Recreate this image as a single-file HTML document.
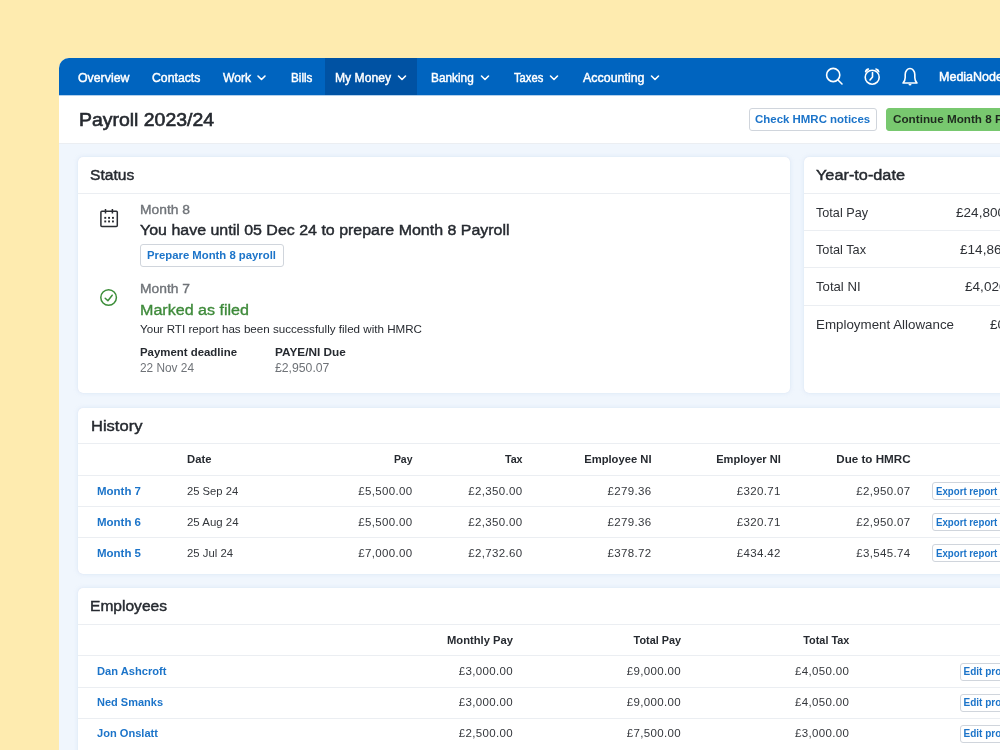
<!DOCTYPE html>
<html><head><meta charset="utf-8"><style>
html,body{margin:0;padding:0;}
body{width:1000px;height:750px;overflow:hidden;position:relative;background:#FEEBAF;font-family:"Liberation Sans",sans-serif;}
.t{position:absolute;line-height:1;white-space:nowrap;transform-origin:0 0;}
.t.r{left:0;text-align:right;transform-origin:100% 0;}
.t.r i{font-style:normal;}
.card{position:absolute;background:#fff;border-radius:5px;box-shadow:0 0 5px rgba(160,185,225,0.22),0 0 1px rgba(160,180,215,0.28);}
.hl{position:absolute;height:1px;}
.btn{position:absolute;border:1px solid #D0D5DC;border-radius:3px;background:#fff;}
</style></head><body>

<div style="position:absolute;left:59px;top:58px;width:1000px;height:800px;border-top-left-radius:10px;overflow:hidden;background:#F0F6FD">
  <div style="position:absolute;left:0;top:0;right:0;height:37px;background:#0064BF"></div>
  <div style="position:absolute;left:266px;top:0;width:92px;height:37px;background:#0052A3"></div>
  <div style="position:absolute;left:0;top:37px;right:0;height:48px;background:#fff;border-bottom:1px solid #EBEEF2"></div>
  <div style="position:absolute;left:0;top:37px;right:0;height:1px;background:rgba(0,100,191,0.3)"></div>
</div>
<div class="card" style="left:78px;top:156.5px;width:711.5px;height:236.5px"></div>
<div class="card" style="left:803.5px;top:156.5px;width:300px;height:236.5px"></div>
<div class="card" style="left:78px;top:407.5px;width:1000px;height:166px"></div>
<div class="card" style="left:78px;top:587.5px;width:1000px;height:300px"></div>

<div class="hl" style="left:78px;top:192.5px;width:711.5px;background:#EBEEF2"></div><div class="hl" style="left:803.5px;top:192.5px;width:196.5px;background:#EBEEF2"></div><div class="hl" style="left:803.5px;top:229.5px;width:196.5px;background:#EBEEF2"></div><div class="hl" style="left:803.5px;top:267px;width:196.5px;background:#EBEEF2"></div><div class="hl" style="left:803.5px;top:304.5px;width:196.5px;background:#EBEEF2"></div><div class="hl" style="left:78px;top:443px;width:922px;background:#EBEEF2"></div><div class="hl" style="left:78px;top:474.5px;width:922px;background:#EBEEF2"></div><div class="hl" style="left:78px;top:505.5px;width:922px;background:#EBEEF2"></div><div class="hl" style="left:78px;top:536.5px;width:922px;background:#EBEEF2"></div><div class="hl" style="left:78px;top:623.5px;width:922px;background:#EBEEF2"></div><div class="hl" style="left:78px;top:655px;width:922px;background:#EBEEF2"></div><div class="hl" style="left:78px;top:686.5px;width:922px;background:#EBEEF2"></div><div class="hl" style="left:78px;top:717.5px;width:922px;background:#EBEEF2"></div>

<div class="btn" style="left:748.5px;top:108px;width:126.5px;height:21px"></div>
<div class="btn" style="left:886px;top:108px;width:200px;height:21px;background:#78C86F;border-color:#78C86F"></div>
<div class="btn" style="left:140px;top:243.5px;width:141.5px;height:21px"></div>
<div class="btn sm" style="left:932.3px;top:482.3px;width:80px;height:15.5px"></div>
<div class="btn sm" style="left:932.3px;top:513.3px;width:80px;height:15.5px"></div>
<div class="btn sm" style="left:932.3px;top:544.3px;width:80px;height:15.5px"></div>
<div class="btn sm" style="left:960.4px;top:663.3px;width:80px;height:15.5px"></div>
<div class="btn sm" style="left:960.4px;top:694.3px;width:80px;height:15.5px"></div>
<div class="btn sm" style="left:960.4px;top:725.3px;width:80px;height:15.5px"></div>


<svg style="position:absolute;left:0;top:0" width="1000" height="750">
  <!-- nav chevrons -->
  <g fill="none" stroke="#fff" stroke-width="1.6" stroke-linecap="round" stroke-linejoin="round">
    <path d="M258 76 l3.5 3.5 l3.5 -3.5"/>
    <path d="M398.5 76 l3.5 3.5 l3.5 -3.5"/>
    <path d="M481.5 76 l3.5 3.5 l3.5 -3.5"/>
    <path d="M550.5 76 l3.5 3.5 l3.5 -3.5"/>
    <path d="M651.5 76 l3.5 3.5 l3.5 -3.5"/>
    <!-- search -->
    <circle cx="833.2" cy="75" r="6.6"/>
    <path d="M838 80 l4 4"/>
    <!-- clock -->
    <circle cx="872.2" cy="77.2" r="7"/>
    <path d="M872.5 72.5 v4.5 l-2.5 3"/>
    <!-- bell -->
    <path d="M903 83 h14 c-1.5 -1.5 -2.2 -3 -2.2 -5.5 v-3 c0 -3.5 -2.3 -6 -4.8 -6 c-2.5 0 -4.8 2.5 -4.8 6 v3 c0 2.5 -0.7 4 -2.2 5.5 z"/>
  </g>
  <path d="M865.5 71.8 c0.3 -1.6 1.6 -2.6 3 -2.8 z M878.9 71.8 c-0.3 -1.6 -1.6 -2.6 -3 -2.8 z" fill="#fff" stroke="#fff" stroke-width="1.4" stroke-linejoin="round"/>
  <path d="M908.5 84 a1.5 1.5 0 0 0 3 0 z" fill="#fff"/>
  <!-- calendar -->
  <g fill="none" stroke="#2A2D33" stroke-width="1.5">
    <rect x="100.9" y="211.2" width="16.4" height="15.2" rx="1"/>
    <path d="M105.5 209 v4.5 M112.4 209 v4.5"/>
  </g>
  <g fill="#2A2D33">
    <rect x="104.3" y="216.9" width="1.9" height="1.9"/><rect x="108.1" y="216.9" width="1.9" height="1.9"/><rect x="112" y="216.9" width="1.9" height="1.9"/>
    <rect x="104.3" y="220.5" width="1.9" height="1.9"/><rect x="108.1" y="220.5" width="1.9" height="1.9"/><rect x="112" y="220.5" width="1.9" height="1.9"/>
  </g>
  <!-- check -->
  <g fill="none" stroke="#3D8E3A" stroke-width="1.5" stroke-linecap="round" stroke-linejoin="round">
    <circle cx="108.6" cy="297.5" r="7.8"/>
    <path d="M105.2 298.3 l2.7 2.5 l4.3 -5.6"/>
  </g>
</svg>

<div style="position:absolute;left:0;top:0;width:1000px;height:750px;will-change:transform">
<span class="t" id="t0" style="left:77.6px;font-size:12.8px;font-weight:400;color:#FFFFFF;top:71.56px;transform:scaleX(0.9636);-webkit-text-stroke:0.45px #FFFFFF;">Overview</span>
<span class="t" id="t1" style="left:151.6px;font-size:12.8px;font-weight:400;color:#FFFFFF;top:71.56px;transform:scaleX(0.9581);-webkit-text-stroke:0.45px #FFFFFF;">Contacts</span>
<span class="t" id="t2" style="left:223.0px;font-size:12.8px;font-weight:400;color:#FFFFFF;top:71.56px;transform:scaleX(0.9451);-webkit-text-stroke:0.45px #FFFFFF;">Work</span>
<span class="t" id="t3" style="left:291.0px;font-size:12.8px;font-weight:400;color:#FFFFFF;top:71.56px;transform:scaleX(0.9119);-webkit-text-stroke:0.45px #FFFFFF;">Bills</span>
<span class="t" id="t4" style="left:335.0px;font-size:12.8px;font-weight:400;color:#FFFFFF;top:71.56px;transform:scaleX(0.9487);-webkit-text-stroke:0.45px #FFFFFF;">My Money</span>
<span class="t" id="t5" style="left:431.0px;font-size:12.8px;font-weight:400;color:#FFFFFF;top:71.56px;transform:scaleX(0.9243);-webkit-text-stroke:0.45px #FFFFFF;">Banking</span>
<span class="t" id="t6" style="left:513.8px;font-size:12.8px;font-weight:400;color:#FFFFFF;top:71.56px;transform:scaleX(0.8748);-webkit-text-stroke:0.45px #FFFFFF;">Taxes</span>
<span class="t" id="t7" style="left:583.0px;font-size:12.8px;font-weight:400;color:#FFFFFF;top:71.56px;transform:scaleX(0.9711);-webkit-text-stroke:0.45px #FFFFFF;">Accounting</span>
<span class="t" id="t8" style="left:938.5px;font-size:12px;font-weight:400;color:#FFFFFF;top:70.84px;transform:scaleX(1.0428);-webkit-text-stroke:0.45px #FFFFFF;">MediaNode</span>
<span class="t" id="t9" style="left:78.8px;font-size:18px;font-weight:400;color:#262A30;top:110.76px;transform:scaleX(1.0792);-webkit-text-stroke:0.6px #262A30;">Payroll 2023/24</span>
<span class="t" id="t10" style="left:755.2px;font-size:11.5px;font-weight:700;color:#1C74C9;top:114.27px;transform:scaleX(0.9959);">Check HMRC notices</span>
<span class="t" id="t11" style="left:893.0px;font-size:11.5px;font-weight:700;color:#1E2A1E;top:114.27px;transform:scaleX(1.0170);">Continue Month 8 Payroll</span>
<span class="t" id="t12" style="left:90.3px;font-size:15.5px;font-weight:400;color:#262A30;top:166.58px;transform:scaleX(1.0056);-webkit-text-stroke:0.45px #262A30;">Status</span>
<span class="t" id="t13" style="left:140.4px;font-size:13px;font-weight:400;color:#6F7378;top:203.00px;transform:scaleX(1.0642);-webkit-text-stroke:0.35px #6F7378;">Month 8</span>
<span class="t" id="t14" style="left:140.0px;font-size:15.5px;font-weight:400;color:#262A30;top:221.88px;transform:scaleX(1.0302);-webkit-text-stroke:0.45px #262A30;">You have until 05 Dec 24 to prepare Month 8 Payroll</span>
<span class="t" id="t15" style="left:147.0px;font-size:11.5px;font-weight:700;color:#1C74C9;top:249.67px;transform:scaleX(0.9846);">Prepare Month 8 payroll</span>
<span class="t" id="t16" style="left:140.0px;font-size:13px;font-weight:400;color:#6F7378;top:282.00px;transform:scaleX(1.0642);-webkit-text-stroke:0.35px #6F7378;">Month 7</span>
<span class="t" id="t17" style="left:140.0px;font-size:15.5px;font-weight:400;color:#3E8A3A;top:301.88px;transform:scaleX(1.0370);-webkit-text-stroke:0.35px #3E8A3A;">Marked as filed</span>
<span class="t" id="t18" style="left:140.0px;font-size:11.5px;font-weight:400;color:#262A30;top:323.77px;transform:scaleX(1.0096);">Your RTI report has been successfully filed with HMRC</span>
<span class="t" id="t19" style="left:140.0px;font-size:11.5px;font-weight:700;color:#262A30;top:347.27px;transform:scaleX(0.9919);">Payment deadline</span>
<span class="t" id="t20" style="left:140.0px;font-size:12px;font-weight:400;color:#6F7378;top:361.64px;transform:scaleX(0.9871);">22 Nov 24</span>
<span class="t" id="t21" style="left:275.0px;font-size:11.5px;font-weight:700;color:#262A30;top:347.27px;transform:scaleX(1.0256);">PAYE/NI Due</span>
<span class="t" id="t22" style="left:275.0px;font-size:12px;font-weight:400;color:#6F7378;top:361.64px;transform:scaleX(1.0189);">£2,950.07</span>
<span class="t" id="t23" style="left:816.4px;font-size:15.5px;font-weight:400;color:#262A30;top:166.58px;transform:scaleX(1.0501);-webkit-text-stroke:0.45px #262A30;">Year-to-date</span>
<span class="t" id="t24" style="left:816.0px;font-size:13.5px;font-weight:400;color:#2E3136;top:205.87px;transform:scaleX(0.9364);">Total Pay</span>
<span class="t" id="t25" style="left:956.0px;font-size:13.5px;font-weight:400;color:#2E3136;top:205.87px;letter-spacing:0.050px;">£24,800.00</span>
<span class="t" id="t26" style="left:816.0px;font-size:13.5px;font-weight:400;color:#2E3136;top:243.12px;transform:scaleX(0.9428);">Total Tax</span>
<span class="t" id="t27" style="left:960.0px;font-size:13.5px;font-weight:400;color:#2E3136;top:243.12px;letter-spacing:0.050px;">£14,865.00</span>
<span class="t" id="t28" style="left:816.0px;font-size:13.5px;font-weight:400;color:#2E3136;top:280.37px;transform:scaleX(0.9742);">Total NI</span>
<span class="t" id="t29" style="left:965.0px;font-size:13.5px;font-weight:400;color:#2E3136;top:280.37px;letter-spacing:0.050px;">£4,020.00</span>
<span class="t" id="t30" style="left:816.0px;font-size:13.5px;font-weight:400;color:#2E3136;top:317.62px;transform:scaleX(0.9887);">Employment Allowance</span>
<span class="t" id="t31" style="left:990.0px;font-size:13.5px;font-weight:400;color:#2E3136;top:317.62px;letter-spacing:0.050px;">£0.00</span>
<span class="t" id="t32" style="left:90.6px;font-size:15.5px;font-weight:400;color:#262A30;top:417.88px;transform:scaleX(1.0656);-webkit-text-stroke:0.45px #262A30;">History</span>
<span class="t" id="t33" style="left:187.0px;font-size:11.5px;font-weight:700;color:#262A30;top:453.87px;transform:scaleX(0.9784);">Date</span>
<span class="t r" id="t34" style="width:412.5px;font-size:11.5px;font-weight:700;color:#262A30;top:453.87px;transform:scaleX(0.9087);"><i>Pay</i></span>
<span class="t r" id="t35" style="width:522.6px;font-size:11.5px;font-weight:700;color:#262A30;top:453.87px;transform:scaleX(0.9331);"><i>Tax</i></span>
<span class="t r" id="t36" style="width:651.5px;font-size:11.5px;font-weight:700;color:#262A30;top:453.87px;transform:scaleX(0.9749);"><i>Employee NI</i></span>
<span class="t r" id="t37" style="width:780.8px;font-size:11.5px;font-weight:700;color:#262A30;top:453.87px;transform:scaleX(0.9626);"><i>Employer NI</i></span>
<span class="t r" id="t38" style="width:910.6px;font-size:11.5px;font-weight:700;color:#262A30;top:453.87px;transform:scaleX(1.0113);"><i>Due to HMRC</i></span>
<span class="t" id="t39" style="left:96.6px;font-size:11.5px;font-weight:700;color:#1C74C9;top:485.87px;transform:scaleX(0.9982);">Month 7</span>
<span class="t" id="t40" style="left:187.0px;font-size:11.5px;font-weight:400;color:#34373C;top:485.87px;transform:scaleX(0.9764);">25 Sep 24</span>
<span class="t r" id="t41" style="width:412.5px;font-size:11.5px;font-weight:400;color:#34373C;top:485.87px;letter-spacing:0.350px;"><i>£5,500.00</i></span>
<span class="t r" id="t42" style="width:522.6px;font-size:11.5px;font-weight:400;color:#34373C;top:485.87px;letter-spacing:0.350px;"><i>£2,350.00</i></span>
<span class="t r" id="t43" style="width:651.5px;font-size:11.5px;font-weight:400;color:#34373C;top:485.87px;letter-spacing:0.350px;"><i>£279.36</i></span>
<span class="t r" id="t44" style="width:780.8px;font-size:11.5px;font-weight:400;color:#34373C;top:485.87px;letter-spacing:0.350px;"><i>£320.71</i></span>
<span class="t r" id="t45" style="width:910.6px;font-size:11.5px;font-weight:400;color:#34373C;top:485.87px;letter-spacing:0.350px;"><i>£2,950.07</i></span>
<span class="t" id="t46" style="left:935.7px;font-size:10px;font-weight:700;color:#1C74C9;top:487.14px;transform:scaleX(0.9677);">Export report</span>
<span class="t" id="t47" style="left:96.6px;font-size:11.5px;font-weight:700;color:#1C74C9;top:516.87px;transform:scaleX(0.9982);">Month 6</span>
<span class="t" id="t48" style="left:187.0px;font-size:11.5px;font-weight:400;color:#34373C;top:516.87px;transform:scaleX(0.9959);">25 Aug 24</span>
<span class="t r" id="t49" style="width:412.5px;font-size:11.5px;font-weight:400;color:#34373C;top:516.87px;letter-spacing:0.350px;"><i>£5,500.00</i></span>
<span class="t r" id="t50" style="width:522.6px;font-size:11.5px;font-weight:400;color:#34373C;top:516.87px;letter-spacing:0.350px;"><i>£2,350.00</i></span>
<span class="t r" id="t51" style="width:651.5px;font-size:11.5px;font-weight:400;color:#34373C;top:516.87px;letter-spacing:0.350px;"><i>£279.36</i></span>
<span class="t r" id="t52" style="width:780.8px;font-size:11.5px;font-weight:400;color:#34373C;top:516.87px;letter-spacing:0.350px;"><i>£320.71</i></span>
<span class="t r" id="t53" style="width:910.6px;font-size:11.5px;font-weight:400;color:#34373C;top:516.87px;letter-spacing:0.350px;"><i>£2,950.07</i></span>
<span class="t" id="t54" style="left:935.7px;font-size:10px;font-weight:700;color:#1C74C9;top:518.13px;transform:scaleX(0.9677);">Export report</span>
<span class="t" id="t55" style="left:96.6px;font-size:11.5px;font-weight:700;color:#1C74C9;top:547.87px;transform:scaleX(0.9982);">Month 5</span>
<span class="t" id="t56" style="left:187.0px;font-size:11.5px;font-weight:400;color:#34373C;top:547.87px;transform:scaleX(0.9853);">25 Jul 24</span>
<span class="t r" id="t57" style="width:412.5px;font-size:11.5px;font-weight:400;color:#34373C;top:547.87px;letter-spacing:0.350px;"><i>£7,000.00</i></span>
<span class="t r" id="t58" style="width:522.6px;font-size:11.5px;font-weight:400;color:#34373C;top:547.87px;letter-spacing:0.350px;"><i>£2,732.60</i></span>
<span class="t r" id="t59" style="width:651.5px;font-size:11.5px;font-weight:400;color:#34373C;top:547.87px;letter-spacing:0.350px;"><i>£378.72</i></span>
<span class="t r" id="t60" style="width:780.8px;font-size:11.5px;font-weight:400;color:#34373C;top:547.87px;letter-spacing:0.350px;"><i>£434.42</i></span>
<span class="t r" id="t61" style="width:910.6px;font-size:11.5px;font-weight:400;color:#34373C;top:547.87px;letter-spacing:0.350px;"><i>£3,545.74</i></span>
<span class="t" id="t62" style="left:935.7px;font-size:10px;font-weight:700;color:#1C74C9;top:549.13px;transform:scaleX(0.9677);">Export report</span>
<span class="t" id="t63" style="left:90.3px;font-size:15.5px;font-weight:400;color:#262A30;top:598.18px;transform:scaleX(1.0041);-webkit-text-stroke:0.45px #262A30;">Employees</span>
<span class="t r" id="t64" style="width:513.0px;font-size:11.5px;font-weight:700;color:#262A30;top:635.27px;transform:scaleX(0.9744);"><i>Monthly Pay</i></span>
<span class="t r" id="t65" style="width:681.0px;font-size:11.5px;font-weight:700;color:#262A30;top:635.27px;transform:scaleX(0.9427);"><i>Total Pay</i></span>
<span class="t r" id="t66" style="width:849.3px;font-size:11.5px;font-weight:700;color:#262A30;top:635.27px;transform:scaleX(0.9430);"><i>Total Tax</i></span>
<span class="t" id="t67" style="left:96.7px;font-size:11.5px;font-weight:700;color:#1C74C9;top:665.77px;transform:scaleX(0.9682);">Dan Ashcroft</span>
<span class="t r" id="t68" style="width:513.0px;font-size:11.5px;font-weight:400;color:#34373C;top:665.77px;letter-spacing:0.350px;"><i>£3,000.00</i></span>
<span class="t r" id="t69" style="width:681.0px;font-size:11.5px;font-weight:400;color:#34373C;top:665.77px;letter-spacing:0.350px;"><i>£9,000.00</i></span>
<span class="t r" id="t70" style="width:849.3px;font-size:11.5px;font-weight:400;color:#34373C;top:665.77px;letter-spacing:0.350px;"><i>£4,050.00</i></span>
<span class="t" id="t71" style="left:963.5px;font-size:10px;font-weight:700;color:#1C74C9;top:667.03px;">Edit profile</span>
<span class="t" id="t72" style="left:96.7px;font-size:11.5px;font-weight:700;color:#1C74C9;top:696.77px;transform:scaleX(0.9561);">Ned Smanks</span>
<span class="t r" id="t73" style="width:513.0px;font-size:11.5px;font-weight:400;color:#34373C;top:696.77px;letter-spacing:0.350px;"><i>£3,000.00</i></span>
<span class="t r" id="t74" style="width:681.0px;font-size:11.5px;font-weight:400;color:#34373C;top:696.77px;letter-spacing:0.350px;"><i>£9,000.00</i></span>
<span class="t r" id="t75" style="width:849.3px;font-size:11.5px;font-weight:400;color:#34373C;top:696.77px;letter-spacing:0.350px;"><i>£4,050.00</i></span>
<span class="t" id="t76" style="left:963.5px;font-size:10px;font-weight:700;color:#1C74C9;top:698.03px;">Edit profile</span>
<span class="t" id="t77" style="left:96.7px;font-size:11.5px;font-weight:700;color:#1C74C9;top:727.77px;transform:scaleX(0.9642);">Jon Onslatt</span>
<span class="t r" id="t78" style="width:513.0px;font-size:11.5px;font-weight:400;color:#34373C;top:727.77px;letter-spacing:0.350px;"><i>£2,500.00</i></span>
<span class="t r" id="t79" style="width:681.0px;font-size:11.5px;font-weight:400;color:#34373C;top:727.77px;letter-spacing:0.350px;"><i>£7,500.00</i></span>
<span class="t r" id="t80" style="width:849.3px;font-size:11.5px;font-weight:400;color:#34373C;top:727.77px;letter-spacing:0.350px;"><i>£3,000.00</i></span>
<span class="t" id="t81" style="left:963.5px;font-size:10px;font-weight:700;color:#1C74C9;top:729.03px;">Edit profile</span>
</div>
</body></html>
